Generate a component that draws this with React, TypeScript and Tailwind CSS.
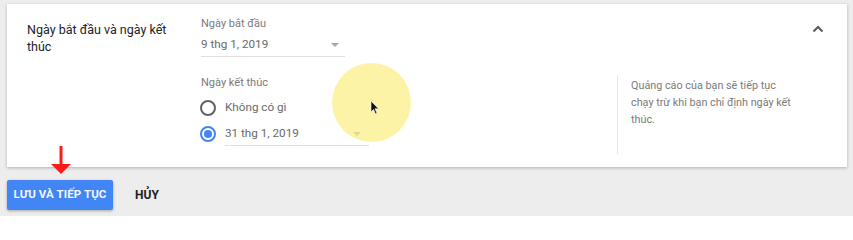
import React from "react";

const Arrow = ({ className = "" }: { className?: string }) => (
  <svg width="8" height="4" viewBox="0 0 8 4" className={className}>
    <path d="M0 0 L8 0 L4 4 Z" fill="#a8a8a8" />
  </svg>
);

export default function App() {
  return (
    <div
      className="relative w-[853px] h-[216px] bg-[#ededed] overflow-hidden pt-[4px] pl-[7px]"
      style={{ fontFamily: "Roboto, 'Noto Sans', sans-serif" }}
    >
      {/* Card */}
      <div className="relative w-[840px] h-[163px] bg-white shadow-[0_1px_3px_rgba(0,0,0,0.25)] flex">
        {/* Left title */}
        <div className="w-[194px] pl-[20px] pt-[17px] pr-[8px]">
          <div className="w-[150px] text-[12.5px] leading-[17px] text-[#222222]">
            Ngày bắt đầu và ngày kết thúc
          </div>
        </div>

        {/* Middle */}
        <div className="w-[416px] pt-[12px]">
          <div className="text-[11px] leading-[16px] text-[#7a7a7a]">Ngày bắt đầu</div>
          <div className="mt-[2px] w-[144px] h-[23px] border-b border-[#e0e0e0] flex items-center justify-between">
            <span className="text-[11.7px] text-[#6a6a6a]">9 thg 1, 2019</span>
            <Arrow className="mr-[6px]" />
          </div>
          <div className="mt-[18px] text-[11px] leading-[16px] text-[#7a7a7a]">Ngày kết thúc</div>
          <div className="mt-[7px] h-[20px] flex items-center">
            <div className="w-[16px] h-[16px] rounded-full border-2 border-[#5f6368] -ml-[1px]" />
            <span className="ml-[9px] text-[11.7px] text-[#6a6a6a]">Không có gì</span>
          </div>
          <div className="mt-[4px] flex items-center">
            <div className="w-[16px] h-[16px] rounded-full border-2 border-[#4285f4] -ml-[1px] flex items-center justify-center">
              <div className="w-[8px] h-[8px] rounded-full bg-[#4285f4]" />
            </div>
            <div className="ml-[9px] w-[144px] h-[24px] border-b border-[#e0e0e0] flex items-center justify-between">
              <span className="text-[11.7px] text-[#6a6a6a]">31 thg 1, 2019</span>
              <Arrow className="mr-[8px]" />
            </div>
          </div>
        </div>

        {/* Right helper */}
        <div className="flex flex-col">
          <div className="mt-[71px] h-[79px] border-l border-[#e6e6e6] pl-[13px] pt-[2px] w-[180px]">
            <div className="w-[162px] text-[10.8px] leading-[17px] text-[#7a7a7a]">
              Quảng cáo của bạn sẽ tiếp tục chạy trừ khi bạn chỉ định ngày kết thúc.
            </div>
          </div>
        </div>

        <div className="flex-1 flex justify-end pr-[23px] pt-[21px]">
          <svg width="12" height="8" viewBox="0 0 12 8">
            <path d="M1.5 6.5 L6 2 L10.5 6.5" stroke="#5a5a5a" strokeWidth="2" fill="none" />
          </svg>
        </div>
      </div>

      {/* Buttons */}
      <div className="mt-[13px] flex items-center">
        <button className="w-[106px] h-[30px] bg-[#4285f4] text-[#f4f7ff] text-[11.5px] font-bold rounded-[2px] shadow-[0_1px_3px_rgba(0,0,0,0.3)] tracking-[0.1px]">
          LƯU VÀ TIẾP TỤC
        </button>
        <button className="ml-[22px] text-[12px] font-bold text-[#222222]">HỦY</button>
      </div>

      {/* Cursor highlight overlay */}
      <div className="absolute left-[332px] top-[63px] w-[79px] h-[79px] rounded-full bg-[#fbee80] opacity-70" />
      <svg className="absolute left-[370px] top-[100px]" width="10" height="15" viewBox="0 0 10 15">
        <path d="M1 1 L1 12 L3.5 9.5 L5.5 14 L7 13.3 L5 8.8 L8.5 8.8 Z" fill="#111" stroke="#fff" strokeWidth="0.6" />
      </svg>

      {/* Red arrow annotation */}
      <svg className="absolute left-[48px] top-[145px]" width="26" height="30" viewBox="0 0 26 30">
        <line x1="13" y1="1" x2="13" y2="22" stroke="#ff1a1a" strokeWidth="3" />
        <path d="M3 19 L23 19 L13 29 Z" fill="#ff1a1a" />
      </svg>
    </div>
  );
}
